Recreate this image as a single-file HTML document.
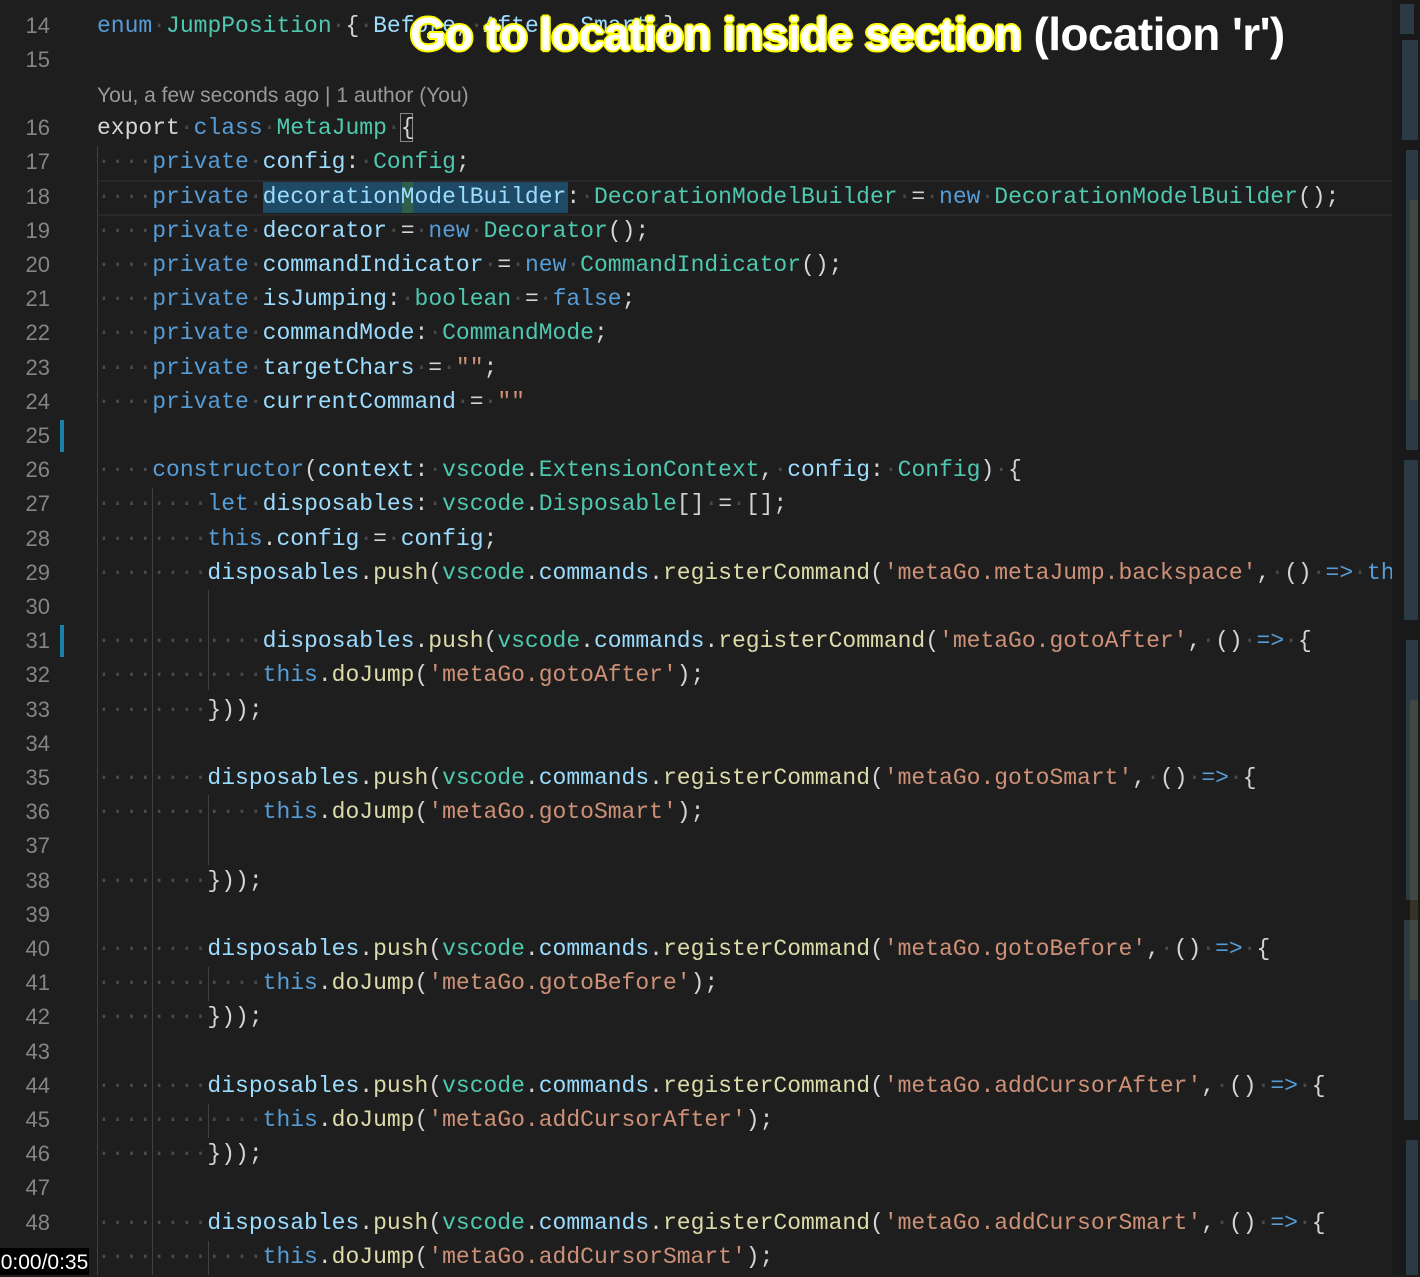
<!DOCTYPE html>
<html><head><meta charset="utf-8">
<style>
html,body{margin:0;padding:0;}
body{width:1420px;height:1275px;background:#1e1e1e;position:relative;overflow:hidden;font-family:"Liberation Mono",monospace;}
.ln{position:absolute;left:0;width:50px;text-align:right;color:#858585;font-size:22px;font-family:"Liberation Sans",sans-serif;height:34px;line-height:34px;}
.c{position:absolute;left:97px;height:34px;line-height:34px;font-size:23px;white-space:pre;color:#d4d4d4;}
.k{color:#569cd6}.t{color:#4ec9b0}.v{color:#9cdcfe}.f{color:#dcdcaa}.s{color:#ce9178}.w{color:#4a4a4a}
.g{position:absolute;width:1px;background:#404040;}
#code{position:absolute;left:0;top:0;width:1392px;height:1275px;overflow:hidden;}
</style></head><body>
<div id="code">
<div style="position:absolute;left:97px;top:180px;width:1295px;height:32px;border-top:2px solid #282828;border-bottom:2px solid #282828;"></div>
<div style="position:absolute;left:263px;top:182px;width:305px;height:31px;background:#1f4a66;"></div>
<div style="position:absolute;left:402px;top:182px;width:11px;height:31px;background:#2f5f4a;"></div>
<div style="position:absolute;left:400px;top:113px;width:13px;height:29px;border:1px solid #888;box-sizing:border-box;"></div>
<div class="g" style="left:97px;top:146px;height:1129px;"></div>
<div class="g" style="left:152px;top:488px;height:787px;"></div>
<div class="g" style="left:208px;top:590px;height:100px;"></div>
<div class="g" style="left:208px;top:795px;height:70px;"></div>
<div class="g" style="left:208px;top:967px;height:34px;"></div>
<div class="g" style="left:208px;top:1104px;height:34px;"></div>
<div class="g" style="left:208px;top:1241px;height:34px;"></div>
<div style="position:absolute;left:60px;top:420px;width:4px;height:32px;background:#1b81a8;"></div>
<div style="position:absolute;left:60px;top:625px;width:4px;height:32px;background:#1b81a8;"></div>

<div class="ln" style="top:9px">14</div><div class="c" style="top:9px"><span class="k">enum</span><span class="w">·</span><span class="t">JumpPosition</span><span class="w">·</span>{<span class="w">·</span><span class="v">Before</span>,<span class="w">·</span><span class="v">After</span>,<span class="w">·</span><span class="v">Smart</span><span class="w">·</span>}</div>
<div class="ln" style="top:43px">15</div>
<div style="position:absolute;left:97px;top:81px;font-family:'Liberation Sans',sans-serif;font-size:21px;color:#999;line-height:30px;">You, a few seconds ago | 1 author (You)</div>
<div class="ln" style="top:111px">16</div><div class="c" style="top:111px">export<span class="w">·</span><span class="k">class</span><span class="w">·</span><span class="t">MetaJump</span><span class="w">·</span>{</div>
<div class="ln" style="top:145px">17</div><div class="c" style="top:145px"><span class="w">····</span><span class="k">private</span><span class="w">·</span><span class="v">config</span>:<span class="w">·</span><span class="t">Config</span>;</div>
<div class="ln" style="top:180px">18</div><div class="c" style="top:180px"><span class="w">····</span><span class="k">private</span><span class="w">·</span><span class="v">decorationModelBuilder</span>:<span class="w">·</span><span class="t">DecorationModelBuilder</span><span class="w">·</span>=<span class="w">·</span><span class="k">new</span><span class="w">·</span><span class="t">DecorationModelBuilder</span>();</div>
<div class="ln" style="top:214px">19</div><div class="c" style="top:214px"><span class="w">····</span><span class="k">private</span><span class="w">·</span><span class="v">decorator</span><span class="w">·</span>=<span class="w">·</span><span class="k">new</span><span class="w">·</span><span class="t">Decorator</span>();</div>
<div class="ln" style="top:248px">20</div><div class="c" style="top:248px"><span class="w">····</span><span class="k">private</span><span class="w">·</span><span class="v">commandIndicator</span><span class="w">·</span>=<span class="w">·</span><span class="k">new</span><span class="w">·</span><span class="t">CommandIndicator</span>();</div>
<div class="ln" style="top:282px">21</div><div class="c" style="top:282px"><span class="w">····</span><span class="k">private</span><span class="w">·</span><span class="v">isJumping</span>:<span class="w">·</span><span class="t">boolean</span><span class="w">·</span>=<span class="w">·</span><span class="k">false</span>;</div>
<div class="ln" style="top:316px">22</div><div class="c" style="top:316px"><span class="w">····</span><span class="k">private</span><span class="w">·</span><span class="v">commandMode</span>:<span class="w">·</span><span class="t">CommandMode</span>;</div>
<div class="ln" style="top:351px">23</div><div class="c" style="top:351px"><span class="w">····</span><span class="k">private</span><span class="w">·</span><span class="v">targetChars</span><span class="w">·</span>=<span class="w">·</span><span class="s">""</span>;</div>
<div class="ln" style="top:385px">24</div><div class="c" style="top:385px"><span class="w">····</span><span class="k">private</span><span class="w">·</span><span class="v">currentCommand</span><span class="w">·</span>=<span class="w">·</span><span class="s">""</span></div>
<div class="ln" style="top:419px">25</div>
<div class="ln" style="top:453px">26</div><div class="c" style="top:453px"><span class="w">····</span><span class="k">constructor</span>(<span class="v">context</span>:<span class="w">·</span><span class="t">vscode</span>.<span class="t">ExtensionContext</span>,<span class="w">·</span><span class="v">config</span>:<span class="w">·</span><span class="t">Config</span>)<span class="w">·</span>{</div>
<div class="ln" style="top:487px">27</div><div class="c" style="top:487px"><span class="w">········</span><span class="k">let</span><span class="w">·</span><span class="v">disposables</span>:<span class="w">·</span><span class="t">vscode</span>.<span class="t">Disposable</span>[]<span class="w">·</span>=<span class="w">·</span>[];</div>
<div class="ln" style="top:522px">28</div><div class="c" style="top:522px"><span class="w">········</span><span class="k">this</span>.<span class="v">config</span><span class="w">·</span>=<span class="w">·</span><span class="v">config</span>;</div>
<div class="ln" style="top:556px">29</div><div class="c" style="top:556px"><span class="w">········</span><span class="v">disposables</span>.<span class="f">push</span>(<span class="t">vscode</span>.<span class="v">commands</span>.<span class="f">registerCommand</span>(<span class="s">'metaGo.metaJump.backspace'</span>,<span class="w">·</span>()<span class="w">·</span><span class="k">=&gt;</span><span class="w">·</span><span class="k">this</span>.<span class="f">doBackspace</span>()));</div>
<div class="ln" style="top:590px">30</div>
<div class="ln" style="top:624px">31</div><div class="c" style="top:624px"><span class="w">············</span><span class="v">disposables</span>.<span class="f">push</span>(<span class="t">vscode</span>.<span class="v">commands</span>.<span class="f">registerCommand</span>(<span class="s">'metaGo.gotoAfter'</span>,<span class="w">·</span>()<span class="w">·</span><span class="k">=&gt;</span><span class="w">·</span>{</div>
<div class="ln" style="top:658px">32</div><div class="c" style="top:658px"><span class="w">············</span><span class="k">this</span>.<span class="f">doJump</span>(<span class="s">'metaGo.gotoAfter'</span>);</div>
<div class="ln" style="top:693px">33</div><div class="c" style="top:693px"><span class="w">········</span>}));</div>
<div class="ln" style="top:727px">34</div>
<div class="ln" style="top:761px">35</div><div class="c" style="top:761px"><span class="w">········</span><span class="v">disposables</span>.<span class="f">push</span>(<span class="t">vscode</span>.<span class="v">commands</span>.<span class="f">registerCommand</span>(<span class="s">'metaGo.gotoSmart'</span>,<span class="w">·</span>()<span class="w">·</span><span class="k">=&gt;</span><span class="w">·</span>{</div>
<div class="ln" style="top:795px">36</div><div class="c" style="top:795px"><span class="w">············</span><span class="k">this</span>.<span class="f">doJump</span>(<span class="s">'metaGo.gotoSmart'</span>);</div>
<div class="ln" style="top:829px">37</div>
<div class="ln" style="top:864px">38</div><div class="c" style="top:864px"><span class="w">········</span>}));</div>
<div class="ln" style="top:898px">39</div>
<div class="ln" style="top:932px">40</div><div class="c" style="top:932px"><span class="w">········</span><span class="v">disposables</span>.<span class="f">push</span>(<span class="t">vscode</span>.<span class="v">commands</span>.<span class="f">registerCommand</span>(<span class="s">'metaGo.gotoBefore'</span>,<span class="w">·</span>()<span class="w">·</span><span class="k">=&gt;</span><span class="w">·</span>{</div>
<div class="ln" style="top:966px">41</div><div class="c" style="top:966px"><span class="w">············</span><span class="k">this</span>.<span class="f">doJump</span>(<span class="s">'metaGo.gotoBefore'</span>);</div>
<div class="ln" style="top:1000px">42</div><div class="c" style="top:1000px"><span class="w">········</span>}));</div>
<div class="ln" style="top:1035px">43</div>
<div class="ln" style="top:1069px">44</div><div class="c" style="top:1069px"><span class="w">········</span><span class="v">disposables</span>.<span class="f">push</span>(<span class="t">vscode</span>.<span class="v">commands</span>.<span class="f">registerCommand</span>(<span class="s">'metaGo.addCursorAfter'</span>,<span class="w">·</span>()<span class="w">·</span><span class="k">=&gt;</span><span class="w">·</span>{</div>
<div class="ln" style="top:1103px">45</div><div class="c" style="top:1103px"><span class="w">············</span><span class="k">this</span>.<span class="f">doJump</span>(<span class="s">'metaGo.addCursorAfter'</span>);</div>
<div class="ln" style="top:1137px">46</div><div class="c" style="top:1137px"><span class="w">········</span>}));</div>
<div class="ln" style="top:1171px">47</div>
<div class="ln" style="top:1206px">48</div><div class="c" style="top:1206px"><span class="w">········</span><span class="v">disposables</span>.<span class="f">push</span>(<span class="t">vscode</span>.<span class="v">commands</span>.<span class="f">registerCommand</span>(<span class="s">'metaGo.addCursorSmart'</span>,<span class="w">·</span>()<span class="w">·</span><span class="k">=&gt;</span><span class="w">·</span>{</div>
<div class="c" style="top:1240px"><span class="w">············</span><span class="k">this</span>.<span class="f">doJump</span>(<span class="s">'metaGo.addCursorSmart'</span>);</div>
</div>

<!-- minimap -->
<div style="position:absolute;left:1392px;top:0;width:28px;height:1275px;background:#191919;">
<svg width="22" height="1275" style="position:absolute;left:6px;top:0">
<g fill="#3c5566" opacity="0.55">
<rect x="2" y="4" width="14" height="30"/><rect x="4" y="40" width="16" height="100"/><rect x="8" y="150" width="12" height="300"/>
<rect x="6" y="460" width="14" height="160"/><rect x="8" y="640" width="12" height="260"/><rect x="6" y="920" width="14" height="200"/><rect x="8" y="1140" width="12" height="135"/>
</g>
<g fill="#6a6040" opacity="0.35"><rect x="12" y="200" width="8" height="200"/><rect x="12" y="700" width="8" height="300"/></g>
</svg>
</div>

<div style="position:absolute;left:410px;top:6px;white-space:nowrap;font-family:'Liberation Sans',sans-serif;font-weight:bold;font-size:46px;line-height:56px;color:#fff;letter-spacing:-0.6px;"><span style="text-shadow:-2px 0 #ff0,2px 0 #ff0,0 -2px #ff0,0 2px #ff0,-1px -1px #ff0,1px 1px #ff0,-1px 1px #ff0,1px -1px #ff0;">Go to location inside section</span> <span>(location 'r')</span></div>

<div style="position:absolute;left:0;top:1248px;width:89px;height:27px;background:#000;color:#fff;font-family:'Liberation Sans',sans-serif;font-size:21px;line-height:29px;text-align:center;">0:00/0:35</div>
</body></html>
